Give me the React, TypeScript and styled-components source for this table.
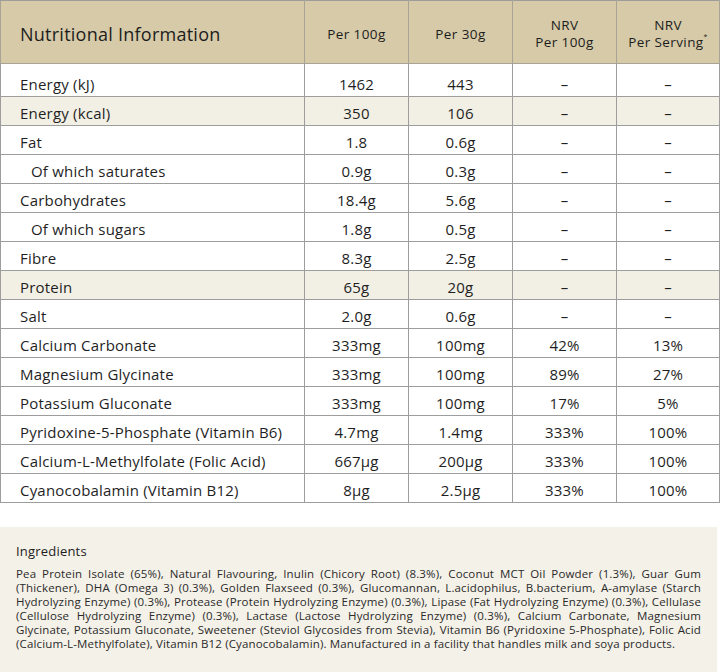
import React from "react";
import styled, { createGlobalStyle } from "styled-components";

const Global = createGlobalStyle`
  html, body { margin: 0; padding: 0; background: #ffffff; }
  body { font-family: "Open Sans", "Noto Sans", sans-serif; color: #1f1f1f; }
`;

const Page = styled.div`
  width: 720px;
  display: flex;
  flex-direction: column;
  gap: 24px;
`;

const Table = styled.table`
  width: 719px;
  border-collapse: collapse;
  table-layout: fixed;
  font-size: 15px;
  letter-spacing: 0.2px;
`;

const HeadCell = styled.th<{ $first?: boolean }>`
  box-sizing: border-box;
  background: #d6caa8;
  height: 63px;
  padding: 4px 0 0;
  padding-left: ${(p) => (p.$first ? "19px" : "0")};
  text-align: ${(p) => (p.$first ? "left" : "center")};
  font-weight: 400;
  font-size: ${(p) => (p.$first ? "18px" : "13.5px")};
  letter-spacing: ${(p) => (p.$first ? "0.25px" : "0.4px")};
  line-height: ${(p) => (p.$first ? "24px" : "17px")};
  border: 1px solid #a9a495;
  border-top-color: #9d9d9d;
  color: #1d1d1d;
  sup { font-size: 7px; line-height: 0; vertical-align: top; position: relative; top: 3px; }
`;

const Row = styled.tr<{ $shade?: boolean; $tall?: boolean }>`
  background: ${(p) => (p.$shade ? "#f2efe5" : "#ffffff")};
  td {
    box-sizing: border-box;
    height: ${(p) => (p.$tall ? "33px" : "29px")};
    padding-top: ${(p) => (p.$tall ? "7px" : "3px")};
    line-height: 20px;
  }
`;

const NameCell = styled.td<{ $indent?: boolean }>`
  border: 1px solid #9d9d9d;
  padding: 0 0 0 ${(p) => (p.$indent ? "30px" : "19px")};
  text-align: left;
  white-space: nowrap;
`;

const ValueCell = styled.td`
  border: 1px solid #9d9d9d;
  padding: 0;
  text-align: center;
`;

const Ingredients = styled.section`
  width: 701px;
  background: #f4f1e8;
  padding: 15px 0 24px 16px;
`;

const IngTitle = styled.h3`
  margin: 0 0 7px;
  font-size: 13px;
  letter-spacing: 0.2px;
  font-weight: 400;
  color: #1d1d1d;
`;

const IngText = styled.div`
  width: 685px;
  font-size: 11.5px;
  letter-spacing: 0.15px;
  line-height: 14px;
  color: #2a2a2a;
`;

const IngLine = styled.div<{ $last?: boolean }>`
  white-space: nowrap;
  text-align: ${(p) => (p.$last ? "left" : "justify")};
  text-align-last: ${(p) => (p.$last ? "left" : "justify")};
`;

type R = { name: string; a: string; b: string; c: string; d: string; indent?: boolean; shade?: boolean; tall?: boolean };

const rows: R[] = [
  { name: "Energy (kJ)", a: "1462", b: "443", c: "–", d: "–", tall: true },
  { name: "Energy (kcal)", a: "350", b: "106", c: "–", d: "–", shade: true },
  { name: "Fat", a: "1.8", b: "0.6g", c: "–", d: "–" },
  { name: "Of which saturates", a: "0.9g", b: "0.3g", c: "–", d: "–", indent: true },
  { name: "Carbohydrates", a: "18.4g", b: "5.6g", c: "–", d: "–" },
  { name: "Of which sugars", a: "1.8g", b: "0.5g", c: "–", d: "–", indent: true },
  { name: "Fibre", a: "8.3g", b: "2.5g", c: "–", d: "–" },
  { name: "Protein", a: "65g", b: "20g", c: "–", d: "–", shade: true },
  { name: "Salt", a: "2.0g", b: "0.6g", c: "–", d: "–" },
  { name: "Calcium Carbonate", a: "333mg", b: "100mg", c: "42%", d: "13%" },
  { name: "Magnesium Glycinate", a: "333mg", b: "100mg", c: "89%", d: "27%" },
  { name: "Potassium Gluconate", a: "333mg", b: "100mg", c: "17%", d: "5%" },
  { name: "Pyridoxine-5-Phosphate (Vitamin B6)", a: "4.7mg", b: "1.4mg", c: "333%", d: "100%" },
  { name: "Calcium-L-Methylfolate (Folic Acid)", a: "667µg", b: "200µg", c: "333%", d: "100%" },
  { name: "Cyanocobalamin (Vitamin B12)", a: "8µg", b: "2.5µg", c: "333%", d: "100%" },
];

const ingredientLines = [
  "Pea Protein Isolate (65%), Natural Flavouring, Inulin (Chicory Root) (8.3%), Coconut MCT Oil Powder (1.3%), Guar Gum",
  "(Thickener), DHA (Omega 3) (0.3%), Golden Flaxseed (0.3%), Glucomannan, L.acidophilus, B.bacterium, A-amylase (Starch",
  "Hydrolyzing Enzyme) (0.3%), Protease (Protein Hydrolyzing Enzyme) (0.3%), Lipase (Fat Hydrolyzing Enzyme) (0.3%), Cellulase",
  "(Cellulose Hydrolyzing Enzyme) (0.3%), Lactase (Lactose Hydrolyzing Enzyme) (0.3%), Calcium Carbonate, Magnesium",
  "Glycinate, Potassium Gluconate, Sweetener (Steviol Glycosides from Stevia), Vitamin B6 (Pyridoxine 5-Phosphate), Folic Acid",
  "(Calcium-L-Methylfolate), Vitamin B12 (Cyanocobalamin). Manufactured in a facility that handles milk and soya products.",
];

export default function App() {
  return (
    <>
      <Global />
      <Page>
        <Table>
          <colgroup>
            <col style={{ width: 304 }} />
            <col style={{ width: 104 }} />
            <col style={{ width: 104 }} />
            <col style={{ width: 104 }} />
            <col style={{ width: 103 }} />
          </colgroup>
          <thead>
            <tr>
              <HeadCell $first>Nutritional Information</HeadCell>
              <HeadCell>Per 100g</HeadCell>
              <HeadCell>Per 30g</HeadCell>
              <HeadCell>NRV<br />Per 100g</HeadCell>
              <HeadCell>NRV<br />Per Serving<sup>*</sup></HeadCell>
            </tr>
          </thead>
          <tbody>
            {rows.map((r) => (
              <Row key={r.name} $shade={r.shade} $tall={r.tall}>
                <NameCell $indent={r.indent}>{r.name}</NameCell>
                <ValueCell>{r.a}</ValueCell>
                <ValueCell>{r.b}</ValueCell>
                <ValueCell>{r.c}</ValueCell>
                <ValueCell>{r.d}</ValueCell>
              </Row>
            ))}
          </tbody>
        </Table>
        <Ingredients>
          <IngTitle>Ingredients</IngTitle>
          <IngText>
            {ingredientLines.map((l, i) => (
              <IngLine key={i} $last={i === ingredientLines.length - 1}>{l}</IngLine>
            ))}
          </IngText>
        </Ingredients>
      </Page>
    </>
  );
}
